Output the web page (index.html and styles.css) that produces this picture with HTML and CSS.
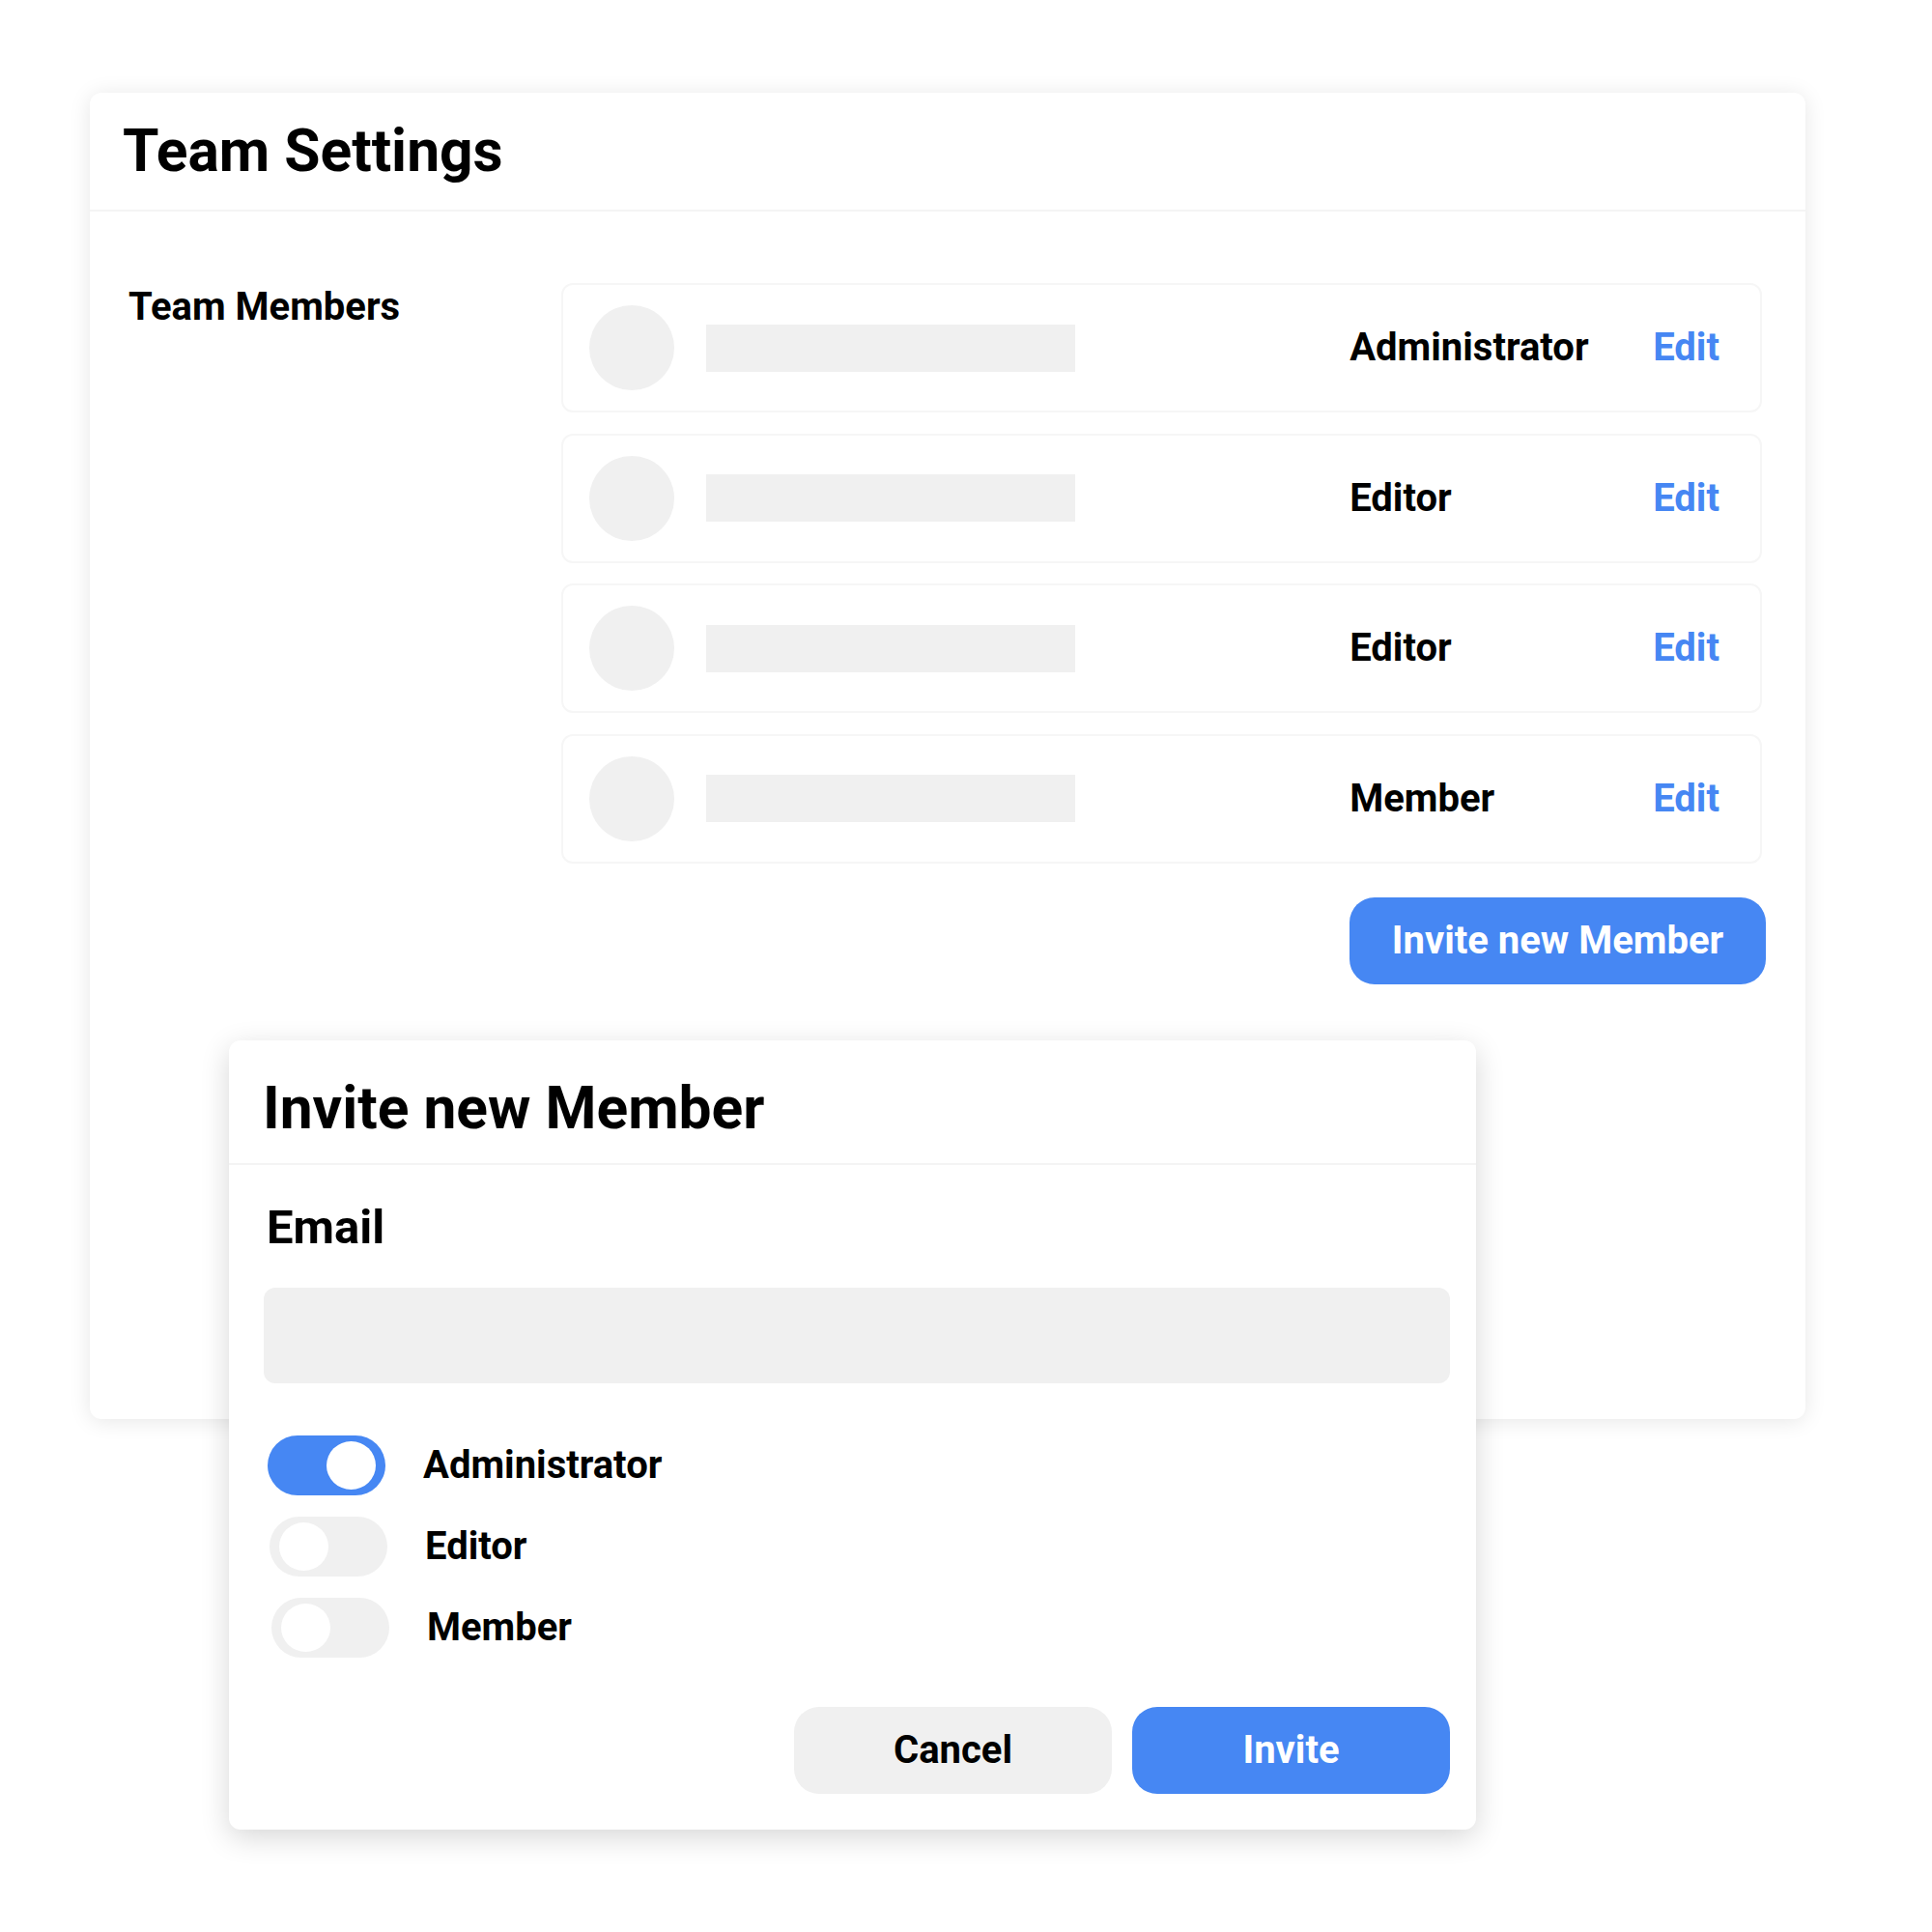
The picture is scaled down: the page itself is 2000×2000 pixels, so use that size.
FILE: index.html
```html
<!DOCTYPE html>
<html lang="en">
<head>
<meta charset="utf-8">
<title>Team Settings</title>
<link rel="stylesheet" href="styles.css">
</head>
<body>
<div class="stage">
  <section class="card">
    <header class="card-header">
      <h1 class="title">Team Settings</h1>
    </header>
    <div class="card-body">
      <h2 class="section-label">Team Members</h2>
      <div class="members">
        <div class="member-row">
          <div class="avatar"></div>
          <div class="name-bar"></div>
          <div class="spacer"></div>
          <div class="role">Administrator</div>
          <a class="edit">Edit</a>
        </div>
        <div class="member-row">
          <div class="avatar"></div>
          <div class="name-bar"></div>
          <div class="spacer"></div>
          <div class="role">Editor</div>
          <a class="edit">Edit</a>
        </div>
        <div class="member-row">
          <div class="avatar"></div>
          <div class="name-bar"></div>
          <div class="spacer"></div>
          <div class="role">Editor</div>
          <a class="edit">Edit</a>
        </div>
        <div class="member-row">
          <div class="avatar"></div>
          <div class="name-bar"></div>
          <div class="spacer"></div>
          <div class="role">Member</div>
          <a class="edit">Edit</a>
        </div>
        <div class="actions">
          <button class="btn btn-primary btn-invite-new">Invite new Member</button>
        </div>
      </div>
    </div>
  </section>

  <section class="modal">
    <header class="modal-header">
      <h1 class="title">Invite new Member</h1>
    </header>
    <div class="modal-body">
      <label class="field-label">Email</label>
      <div class="input"></div>
      <div class="toggles">
        <div class="toggle-row">
          <span class="toggle on"><span class="knob"></span></span>
          <span class="toggle-label">Administrator</span>
        </div>
        <div class="toggle-row">
          <span class="toggle"><span class="knob"></span></span>
          <span class="toggle-label">Editor</span>
        </div>
        <div class="toggle-row">
          <span class="toggle"><span class="knob"></span></span>
          <span class="toggle-label">Member</span>
        </div>
      </div>
      <div class="modal-actions">
        <button class="btn btn-secondary">Cancel</button>
        <button class="btn btn-primary">Invite</button>
      </div>
    </div>
  </section>
</div>
</body>
</html>
```

FILE: styles.css
```css
* { box-sizing: border-box; }

html, body {
  margin: 0;
  padding: 0;
  background: #ffffff;
}

body {
  font-family: Roboto, "Liberation Sans", Arial, sans-serif;
  font-weight: 700;
  color: #000;
  width: 2000px;
  height: 2000px;
}

.stage {
  position: relative;
  padding: 96px 0 0 93px;
}

.card {
  width: 1776px;
  height: 1373px;
  background: #fff;
  border-radius: 12px;
  box-shadow: 0 2px 22px rgba(0, 0, 0, 0.10);
}

.card-header {
  padding: 25px 34px 24px;
  border-bottom: 2px solid #f4f4f4;
}

.title {
  margin: 0;
  font-size: 60.5px;
  line-height: 72px;
  font-weight: 700;
}

.card-body {
  display: flex;
  padding: 74px 45px 0 40px;
}

.section-label {
  margin: 1px 0 0;
  width: 448px;
  flex: none;
  font-size: 40px;
  line-height: 48px;
  font-weight: 700;
}

.members {
  flex: 1;
  display: flex;
  flex-direction: column;
  gap: 21.5px;
}

.member-row {
  display: flex;
  align-items: center;
  height: 134px;
  padding: 0 42px 0 27px;
  border: 2px solid #f6f6f6;
  border-radius: 12px;
}

.avatar {
  width: 88px;
  height: 88px;
  border-radius: 50%;
  background: #f0f0f0;
  flex: none;
}

.name-bar {
  width: 382px;
  height: 49px;
  margin-left: 33px;
  background: #f0f0f0;
  flex: none;
}

.spacer { flex: 1; }

.role {
  width: 314px;
  font-size: 40px;
  line-height: 48px;
}

.edit {
  font-size: 40px;
  line-height: 48px;
  color: #4687f3;
}

.actions {
  display: flex;
  justify-content: flex-end;
  margin-top: 14px;
  margin-right: -4px;
}

.btn {
  font-family: Roboto, "Liberation Sans", Arial, sans-serif;
  font-weight: 700;
  font-size: 40px;
  line-height: 48px;
  border: none;
  border-radius: 26px;
  height: 90px;
  padding: 0;
  cursor: pointer;
}

.btn-primary {
  background: #4687f3;
  color: #fff;
}

.btn-secondary {
  background: #f0f0f0;
  color: #000;
}

.btn-invite-new {
  width: 431px;
}

/* Modal overlay */
.modal {
  position: absolute;
  left: 237px;
  top: 1077px;
  width: 1291px;
  background: #fff;
  border-radius: 12px;
  box-shadow: 0 8px 30px rgba(0, 0, 0, 0.16);
}

.modal-header {
  padding: 35px 35px 20px;
  border-bottom: 2px solid #f4f4f4;
}

.modal-body {
  display: flex;
  flex-direction: column;
  padding: 37px 27px 37px 36px;
}

.field-label {
  display: block;
  margin-left: 3px;
  font-size: 49px;
  line-height: 56px;
  font-weight: 700;
}

.input {
  margin-top: 34px;
  height: 99px;
  border-radius: 12px;
  background: #f0f0f0;
}

.toggles {
  margin-top: 54px;
  display: flex;
  flex-direction: column;
  gap: 22px;
}

.toggle-row {
  display: flex;
  align-items: center;
  gap: 39px;
  padding-left: 4px;
}

.toggle-row + .toggle-row {
  padding-left: 6px;
}

.toggle-row:last-child {
  padding-left: 8px;
}

.toggle {
  position: relative;
  display: flex;
  align-items: center;
  width: 122px;
  height: 62px;
  border-radius: 31px;
  background: #f0f0f0;
  padding: 0 10px;
  flex: none;
}

.toggle .knob {
  width: 51px;
  height: 50px;
  border-radius: 50%;
  background: #fff;
}

.toggle.on {
  background: #4687f3;
  justify-content: flex-end;
}

.toggle-label {
  font-size: 40px;
  line-height: 48px;
}

.modal-actions {
  margin-top: 51px;
  display: flex;
  justify-content: flex-end;
  gap: 21px;
}

.modal-actions .btn {
  width: 329px;
}
```
